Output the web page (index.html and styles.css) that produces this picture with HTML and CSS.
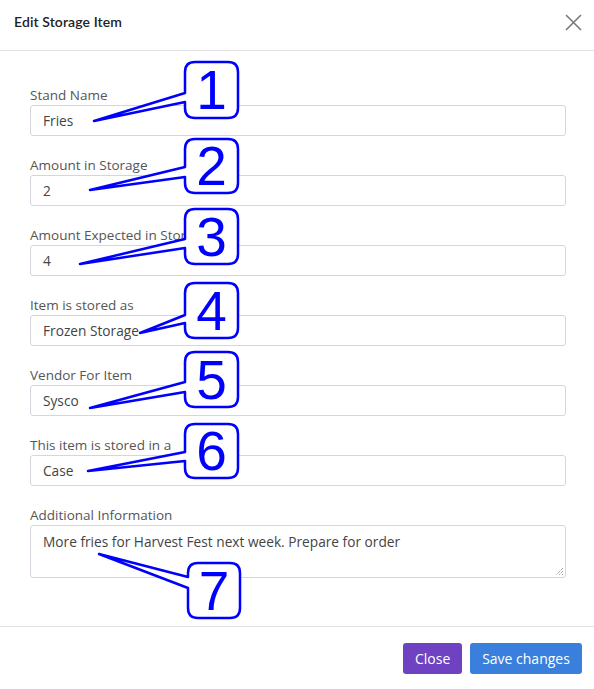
FILE: index.html
```html
<!DOCTYPE html>
<html>
<head>
<meta charset="utf-8">
<link rel="stylesheet" href="styles.css">
</head>
<body>
<div class="modal">
  <div class="modal-header">
    <h5 class="modal-title">Edit Storage Item</h5>
    <button class="close" aria-label="Close">
      <svg width="17" height="17" viewBox="0 0 17 17"><path d="M1 1L16 16M16 1L1 16" stroke="#7a7a7a" stroke-width="1.6" fill="none"/></svg>
    </button>
  </div>
  <div class="modal-body">
    <div class="group"><label>Stand Name</label><div class="input">Fries</div></div>
    <div class="group"><label>Amount in Storage</label><div class="input">2</div></div>
    <div class="group"><label>Amount Expected in Storage</label><div class="input">4</div></div>
    <div class="group"><label>Item is stored as</label><div class="input">Frozen Storage</div></div>
    <div class="group"><label>Vendor For Item</label><div class="input">Sysco</div></div>
    <div class="group"><label>This item is stored in a</label><div class="input">Case</div></div>
    <div class="group"><label>Additional Information</label><div class="input textarea">More fries for Harvest Fest next week. Prepare for order
      <svg class="grip" width="9" height="9" viewBox="0 0 9 9"><path d="M8 1L1 8M8 4L4 8M8 7L7 8" stroke="#777" stroke-width="1" stroke-dasharray="1 1" fill="none"/></svg></div></div>
  </div>
  <div class="modal-footer">
    <button class="btn btn-close">Close</button>
    <button class="btn btn-save">Save changes</button>
  </div>

  <svg class="callouts" width="594" height="689" viewBox="0 0 594 689">
    <g fill="#fff" stroke="#0000ff" stroke-width="2.5" stroke-linejoin="round">
      <path d="M185 93 L94 121 L185 102 V108 Q185 118 195 118 H228 Q238 118 238 108 V72 Q238 62 228 62 H195 Q185 62 185 72 Z"/>
      <path d="M185 167 L90 190 L185 177 V183 Q185 193 195 193 H228 Q238 193 238 183 V149 Q238 139 228 139 H195 Q185 139 185 149 Z"/>
      <path d="M185 239 L80 264 L185 248 V254 Q185 264 195 264 H228 Q238 264 238 254 V219 Q238 209 228 209 H195 Q185 209 185 219 Z"/>
      <path d="M185 315 L140 333 L185 323 V328 Q185 338 195 338 H228 Q238 338 238 328 V293 Q238 283 228 283 H195 Q185 283 185 293 Z"/>
      <path d="M185 382 L90 408 L185 392 V397 Q185 407 195 407 H228 Q238 407 238 397 V362 Q238 352 228 352 H195 Q185 352 185 362 Z"/>
      <path d="M185 452 L88 471 L185 461 V468 Q185 478 195 478 H228 Q238 478 238 468 V434 Q238 424 228 424 H195 Q185 424 185 434 Z"/>
      <path d="M188 577 L99 554 L188 588 V608 Q188 618 198 618 H230 Q240 618 240 608 V573 Q240 563 230 563 H198 Q188 563 188 573 Z"/>
    </g>
    <g class="nums" fill="#0000ff" font-family="Liberation Sans, Arial, sans-serif" font-size="55" text-anchor="middle">
      <text x="211.5" y="109">1</text>
      <text x="211.5" y="185">2</text>
      <text x="211.5" y="256">3</text>
      <text x="211.5" y="330">4</text>
      <text x="211.5" y="399">5</text>
      <text x="211.5" y="470">6</text>
      <text x="214" y="610">7</text>
    </g>
  </svg>
</div>
</body>
</html>
```

FILE: styles.css
```css
* { box-sizing: border-box; }
html, body { margin: 0; padding: 0; background: #fff; }
body { font-family: "Open Sans", "Noto Sans", sans-serif; color: #555; }

.modal {
  position: relative;
  width: 594px;
  height: 689px;
  display: flex;
  flex-direction: column;
}

.modal-header {
  height: 51px;
  display: flex;
  align-items: flex-start;
  justify-content: space-between;
  padding: 12px 12px 0 14px;
  border-bottom: 1px solid #e2e1e8;
}
.modal-title {
  margin: 0;
  font-family: "Lato", sans-serif;
  font-weight: 600;
  font-size: 14px;
  line-height: 20px;
  color: #222;
  letter-spacing: 0.1px;
}
.close {
  border: 0;
  background: none;
  padding: 0;
  display: flex;
  margin-top: 2px;
}

.modal-body {
  padding: 34px 28px 0 30px;
  height: 576px;
  border-bottom: 1px solid #e2e1e8;
}
.group { margin-bottom: 19px; }
.group label {
  display: block;
  font-size: 13.5px;
  line-height: 20px;
  color: #555;
}
.input {
  height: 31px;
  border: 1px solid #d6d5de;
  border-radius: 3px;
  padding: 0 12px;
  font-size: 13.7px;
  line-height: 29px;
  color: #444;
}
.textarea {
  position: relative;
  height: 53px;
  padding-top: 1px;
}
.grip { position: absolute; right: 1px; bottom: 1px; }

.modal-footer {
  display: flex;
  justify-content: flex-end;
  gap: 8px;
  padding: 16px 12px 0 0;
}
.btn {
  height: 31px;
  border: 0;
  border-radius: 3px;
  color: #fff;
  font-family: "Open Sans", sans-serif;
  font-size: 14px;
  padding: 0 12px;
}
.btn-close { background: #6f42c1; width: 59px; }
.btn-save { background: #3a7fdc; width: 112px; }

.callouts { position: absolute; left: 0; top: 0; pointer-events: none; }
```
